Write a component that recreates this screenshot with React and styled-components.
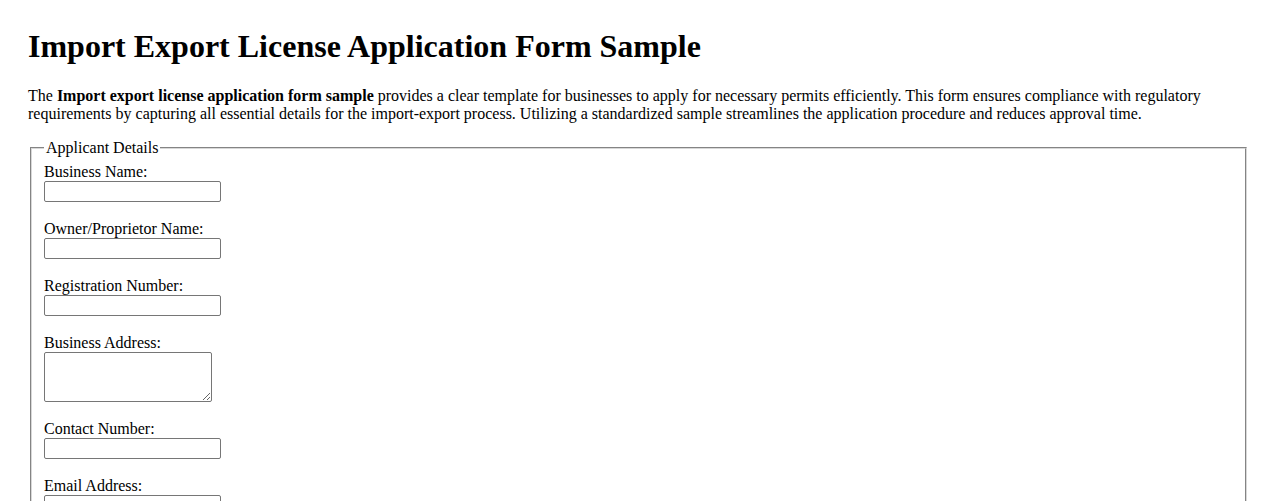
import React from 'react'
import styled, { createGlobalStyle } from 'styled-components'

const GlobalStyle = createGlobalStyle`
  body {
    margin: 0;
    font-family: "Liberation Serif", "Times New Roman", serif;
    font-size: 16px;
    color: #000;
    background: #fff;
  }
`

const Page = styled.div`
  padding: 28px 29px 40px 28px;
`

const Title = styled.h1`
  font-size: 32px;
  font-weight: bold;
  margin: 0 0 21.5px;
`

const Intro = styled.p`
  margin: 0 0 16px;
  line-height: normal;
`

const Section = styled.fieldset`
  margin: 0 2px;
  padding: 6.6px 12px 10px;
  border: 2px groove #d8d8d8;
`

const Legend = styled.legend`
  padding: 0 2px;
`

const Field = styled.div`
  margin-bottom: 18px;
`

const Label = styled.label`
  display: block;
  line-height: normal;
`

const TextInput = styled.input`
  display: block;
  box-sizing: border-box;
  width: 177px;
  height: 21px;
  margin: 0;
  padding: 1px 2px;
  border: 1px solid #767676;
  border-radius: 2px;
  font: 13.33px Arial, "Liberation Sans", sans-serif;
`

const TextArea = styled.textarea`
  display: block;
  box-sizing: border-box;
  width: 168px;
  height: 50px;
  margin: 0;
  padding: 2px;
  border: 1px solid #767676;
  border-radius: 2px;
  font: 13.33px "Liberation Mono", monospace;
`

const fields = [
  { id: 'businessName', label: 'Business Name:' },
  { id: 'ownerName', label: 'Owner/Proprietor Name:' },
  { id: 'regNumber', label: 'Registration Number:' },
  { id: 'address', label: 'Business Address:', multiline: true },
  { id: 'contact', label: 'Contact Number:', type: 'tel' },
  { id: 'email', label: 'Email Address:', type: 'email' },
]

const App = () => {
  return (
    <Page>
      <GlobalStyle />
      <Title>Import Export License Application Form Sample</Title>
      <Intro>
        The <b>Import export license application form sample</b> provides a clear
        template for businesses to apply for necessary permits efficiently. This
        form ensures compliance with regulatory requirements by capturing all
        essential details for the import-export process. Utilizing a standardized
        sample streamlines the application procedure and reduces approval time.
      </Intro>
      <form>
        <Section>
          <Legend>Applicant Details</Legend>
          {fields.map(field => (
            <Field key={field.id}>
              <Label htmlFor={field.id}>{field.label}</Label>
              {field.multiline ? (
                <TextArea id={field.id} rows={3} />
              ) : (
                <TextInput id={field.id} type={field.type || 'text'} />
              )}
            </Field>
          ))}
        </Section>
      </form>
    </Page>
  )
}

export default App
